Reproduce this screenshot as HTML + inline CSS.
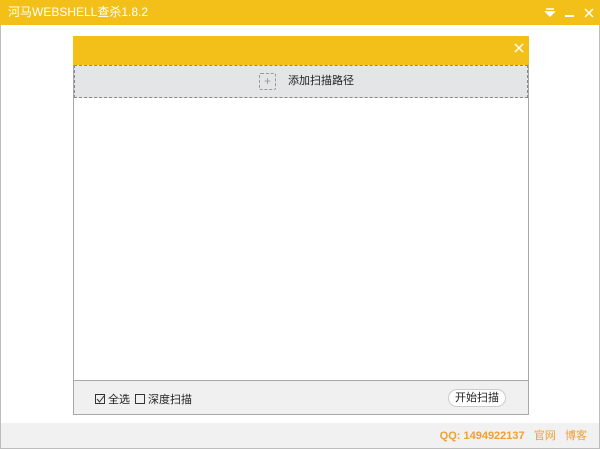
<!DOCTYPE html><html><head><meta charset="utf-8"><style>
*{margin:0;padding:0;box-sizing:border-box}
body{width:600px;height:449px;position:relative;background:#fff;font-family:"Liberation Sans","Noto Sans CJK SC",sans-serif;overflow:hidden}
.win{position:absolute;left:0;top:0;width:600px;height:449px;border:1px solid #bdbdbd}
.title{position:absolute;left:-1px;top:-1px;width:600px;height:25px;background:#f2c019;color:#fff;font-size:12px;line-height:25px;padding-left:8px}
.dlg{position:absolute;left:72px;top:35px;width:456px;height:379px;border:1px solid #a8a8a8;background:#fff}
.dh{position:absolute;left:-1px;top:-1px;width:456px;height:29px;background:#f2c019}
.add{position:absolute;left:0;top:28px;width:454px;height:33px;background:#e4e5e7;border:1px dashed #888;font-size:11px;color:#222;line-height:31px}
.foot{position:absolute;left:0;bottom:0;width:454px;height:34px;background:#f0f0f0;border-top:1px solid #a8a8a8;font-size:11px;color:#222}
.bb{position:absolute;left:0;top:422px;width:598px;height:25px;background:#f1f1f1;font-size:11px;color:#f0a030;line-height:26px;text-align:right;padding-right:12px}
.cb{display:inline-block;width:10px;height:10px;border:1px solid #333;vertical-align:-1px;margin-right:3px;position:relative}
</style></head><body><div class="win">
<div class="title">河马WEBSHELL查杀1.8.2
<svg style="position:absolute;left:544px;top:8px" width="50" height="10"><path d="M2 1h8M2 4h8l-4 4z" stroke="#fff" fill="#fff" stroke-width="1.5"/><path d="M21 8h9" stroke="#fff" stroke-width="2"/><path d="M41 1l8 8M49 1l-8 8" stroke="#fff" stroke-width="1.5"/></svg></div>
<div class="dlg"><div class="dh"><svg style="position:absolute;left:441px;top:7px" width="10" height="10"><path d="M1 1l8 8M9 1l-8 8" stroke="#fff" stroke-width="1.5"/></svg></div>
<div class="add"><span style="position:absolute;left:184px;top:7px;width:17px;height:17px;border:1px dashed #999;border-radius:2px;color:#999;text-align:center;line-height:15px;font-size:12px">+</span><span style="position:absolute;left:213px">添加扫描路径</span></div>
<div class="foot"><span style="position:absolute;left:21px;top:10px"><span class="cb"><svg style="position:absolute;left:0;top:0" width="9" height="9"><path d="M1 4l2.5 3L8 1" stroke="#333" fill="none"/></svg></span>全选</span><span style="position:absolute;left:61px;top:10px"><span class="cb"></span>深度扫描</span>
<span style="position:absolute;left:374px;top:8px;width:58px;height:18px;border:1px solid #ccc;border-radius:9px;background:#fff;text-align:center;line-height:16px">开始扫描</span></div></div>
<div class="bb"><b>QQ: 1494922137</b> &nbsp; 官网 &nbsp; 博客</div>
</div></body></html>
